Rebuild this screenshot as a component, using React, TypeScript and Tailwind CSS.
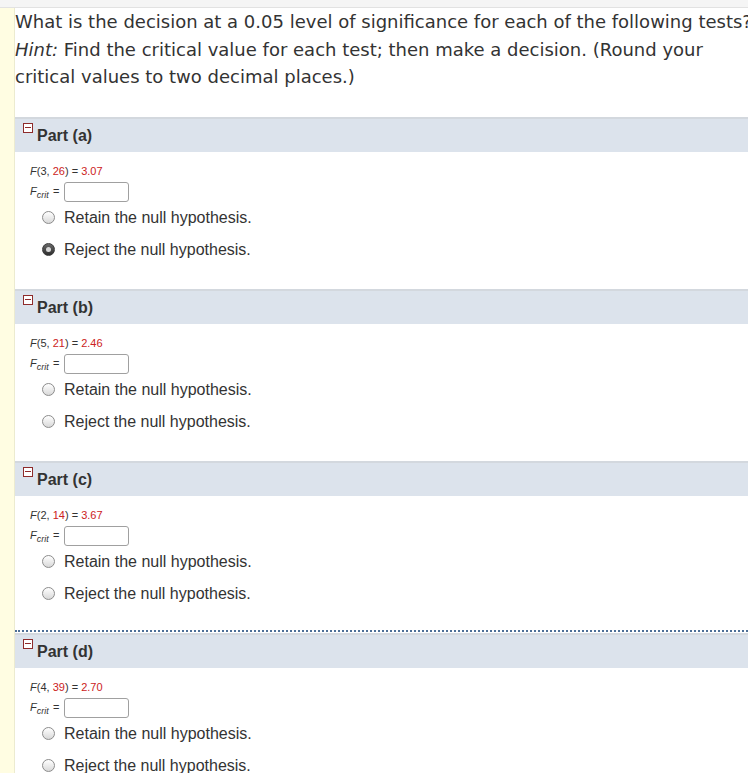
import React from "react";

type Part = {
  label: string;
  df1: number;
  df2: number;
  value: string;
  checked: "retain" | "reject" | null;
  dotted?: boolean;
};

const parts: Part[] = [
  { label: "a", df1: 3, df2: 26, value: "3.07", checked: "reject" },
  { label: "b", df1: 5, df2: 21, value: "2.46", checked: null },
  { label: "c", df1: 2, df2: 14, value: "3.67", checked: null, dotted: true },
  { label: "d", df1: 4, df2: 39, value: "2.70", checked: null },
];

const Radio = ({ on }: { on: boolean }) => {
  if (on) {
    return (
      <span className="flex h-[13px] w-[13px] items-center justify-center rounded-full border border-[#3a3a3a] bg-gradient-to-b from-[#6a6a6a] to-[#2e2e2e]">
        <span className="h-[5px] w-[5px] rounded-full bg-[#d8d8d8]" />
      </span>
    );
  }
  return (
    <span className="block h-[13px] w-[13px] rounded-full border border-[#8c8c8c] bg-gradient-to-b from-[#ffffff] to-[#d9d9d9]" />
  );
};

const CollapseIcon = () => (
  <span className="flex h-[10px] w-[10px] items-center justify-center border border-[#8e2b2b] bg-white">
    <span className="h-[1px] w-[6px] bg-[#8e2b2b]" />
  </span>
);

const Section = ({ part }: { part: Part }) => {
  return (
    <div>
      <div className="flex h-[35px] items-center border-t-2 border-[#d3d8de] bg-[#dce3ec] pl-[8px]">
        <div className="mt-[4px] self-start">
          <CollapseIcon />
        </div>
        <span className="ml-[4px] mt-[1px] text-[16px] font-bold text-[#333]">
          Part ({part.label})
        </span>
      </div>
      <div
        className={`pt-[12px] pl-[15px] ${
          part.dotted
            ? "pb-[23px] border-b-2 border-dotted border-[#4d6f97] mb-[1px]"
            : "pb-[26px]"
        }`}
      >
        <div className="h-[14px] text-[11px] leading-[14px] text-[#333]">
          <i>F</i>({part.df1}, <span className="text-[#cc2222]">{part.df2}</span>) ={" "}
          <span className="text-[#cc2222]">{part.value}</span>
        </div>
        <div className="mt-[4px] flex h-[20px] items-center">
          <span className="w-[21px] text-[11px] text-[#333]">
            <i>F</i>
            <sub className="text-[9px] italic">crit</sub>
          </span>
          <span className="ml-[2px] text-[11px] text-[#333]">=</span>
          <span className="ml-[5px] h-[20px] w-[65px] rounded-[3px] border border-[#a0a0a0] bg-white" />
        </div>
        <div className="mt-[1px] flex flex-col gap-[4px] pl-[12px] text-[16px] text-[#333]">
          <label className="flex h-[28px] items-center pt-[2px]">
            <Radio on={part.checked === "retain"} />
            <span className="ml-[9px]">Retain the null hypothesis.</span>
          </label>
          <label className="flex h-[28px] items-center pt-[2px]">
            <Radio on={part.checked === "reject"} />
            <span className="ml-[9px]">Reject the null hypothesis.</span>
          </label>
        </div>
      </div>
    </div>
  );
};

const App = () => {
  return (
    <div
      className="h-[773px] w-[748px] overflow-hidden bg-white"
      style={{ fontFamily: '"Liberation Sans", Arial, sans-serif' }}
    >
      <div className="h-[8px] border-b border-[#e2e2e2] bg-[#f5f5f5]" />
      <div className="flex">
        <div className="w-[15px] shrink-0 border-r border-[#ecebd0] bg-[#fffde2]" />
        <div className="min-w-0 flex-1">
          <div
            className="overflow-hidden whitespace-nowrap pb-[26px] text-[18px] leading-[27.5px] text-[#333]"
            style={{ fontFamily: '"DejaVu Sans", Verdana, sans-serif' }}
          >
            <div>What is the decision at a 0.05 level of significance for each of the following tests?</div>
            <div>
              <i>Hint:</i> Find the critical value for each test; then make a decision. (Round your
            </div>
            <div>critical values to two decimal places.)</div>
          </div>
          {parts.map((part) => (
            <Section key={part.label} part={part} />
          ))}
        </div>
      </div>
    </div>
  );
};

export default App;
